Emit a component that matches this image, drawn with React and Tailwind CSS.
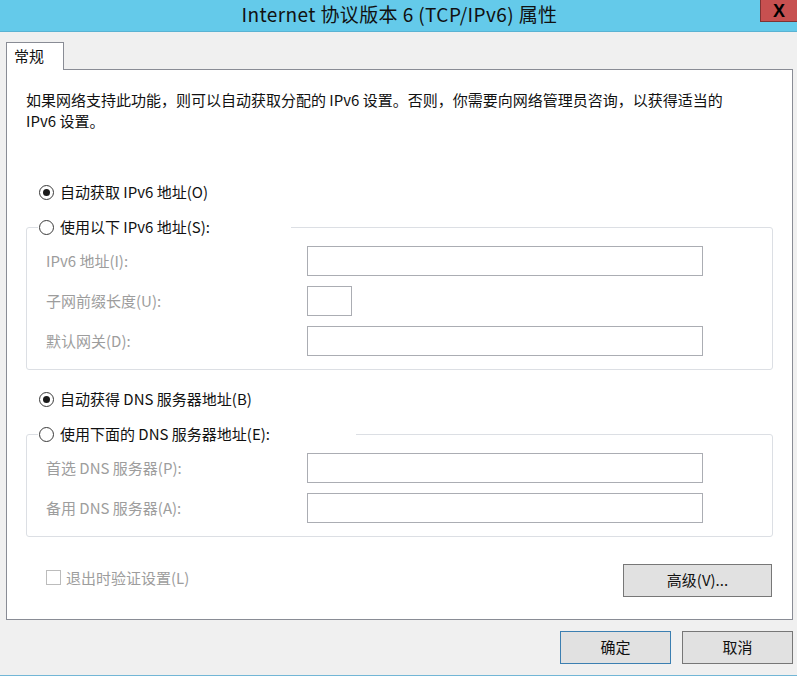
import React from "react";

const FONT = { fontFamily: '"Noto Sans CJK SC", "Noto Sans", sans-serif' };

function Radio({ checked, label }) {
  return (
    <div className="flex items-center h-[20px] leading-[20px] whitespace-nowrap">
      <span className="ml-px w-[15px] h-[15px] rounded-full border border-[#3a3a3a] bg-white flex items-center justify-center shrink-0">
        {checked && <span className="w-[7px] h-[7px] rounded-full bg-[#1a1a1a]" />}
      </span>
      <span className="ml-[6px] text-[15px] text-[#111]">{label}</span>
    </div>
  );
}

function Row({ label, small }) {
  return (
    <div className="flex items-center h-[30px] pl-2">
      <div className="w-[261px] text-[15px] text-[#9d9d9d] whitespace-nowrap leading-[20px]">{label}</div>
      <div className={`${small ? "w-[45px]" : "w-[396px]"} h-[30px] border border-[#abadb3] bg-white`} />
    </div>
  );
}

function Group({ legendWidth, radioLabel, children }) {
  return (
    <fieldset className="border border-[#dcdfe4] rounded-[3px] pl-[11px] pr-[11px] pt-[9px] pb-[13px]">
      <legend className="p-0" style={{ width: legendWidth }}>
        <Radio checked={false} label={radioLabel} />
      </legend>
      <div className="flex flex-col gap-[10px]">{children}</div>
    </fieldset>
  );
}

export default function App() {
  return (
    <div className="w-[797px] h-[676px] bg-[#f0f0f0] flex flex-col border-b border-[#72b6d6] overflow-hidden" style={FONT}>
      {/* Title bar */}
      <div className="relative h-[32px] shrink-0 bg-[#64caea] border-b border-[#5ab3d3] flex items-start justify-center">
        <div className="text-[19px] tracking-[0.4px] leading-[27px] text-[#111] whitespace-nowrap pl-[2px]">Internet 协议版本 6 (TCP/IPv6) 属性</div>
        <div className="absolute right-0 top-0 w-[37px] h-[22px] bg-[#c75050] border-l border-b border-[#7e3434] flex items-center justify-center">
          <span className="text-[18px] font-bold leading-none text-black" style={{ fontFamily: '"Liberation Sans", sans-serif' }}>X</span>
        </div>
      </div>

      {/* Tab */}
      <div className="mt-[10px] ml-[6px] flex">
        <div className="relative z-10 w-[58px] h-[28px] -mb-px bg-white border-t border-l border-r border-[#898c95] pl-[7px] text-[15px] leading-[26px] text-[#111]">
          常规
        </div>
      </div>

      {/* Panel */}
      <div className="ml-[6px] w-[787px] h-[551px] bg-white border border-[#898c95] px-[19px] flex flex-col shrink-0">
        <p className="mt-[19px] text-[15px] leading-[21px] text-[#111] whitespace-nowrap">
          如果网络支持此功能，则可以自动获取分配的 IPv6 设置。否则，你需要向网络管理员咨询，以获得适当的
          <br />
          IPv6 设置。
        </p>

        <div className="mt-[51px] pl-[12px]">
          <Radio checked label="自动获取 IPv6 地址(O)" />
        </div>

        <div className="mt-[15px]">
          <Group legendWidth="253px" radioLabel="使用以下 IPv6 地址(S):">
            <Row label="IPv6 地址(I):" />
            <Row label="子网前缀长度(U):" small />
            <Row label="默认网关(D):" />
          </Group>
        </div>

        <div className="mt-[19px] pl-[12px]">
          <Radio checked label="自动获得 DNS 服务器地址(B)" />
        </div>

        <div className="mt-[15px]">
          <Group legendWidth="318px" radioLabel="使用下面的 DNS 服务器地址(E):">
            <Row label="首选 DNS 服务器(P):" />
            <Row label="备用 DNS 服务器(A):" />
          </Group>
        </div>

        <div className="mt-[27px] flex justify-between items-start">
          <div className="mt-[3px] ml-[20px] flex items-center h-[21px]">
            <span className="w-[15px] h-[15px] border border-[#bcbcbc] bg-white" />
            <span className="ml-[5px] text-[15px] leading-[21px] text-[#9d9d9d]">退出时验证设置(L)</span>
          </div>
          <div className="mr-px w-[149px] h-[33px] bg-[#e1e1e1] border border-[#777] flex items-center justify-center text-[15px] text-[#111]">
            高级(V)...
          </div>
        </div>
      </div>

      {/* Bottom buttons */}
      <div className="mt-[11px] flex justify-end gap-[11px] pr-[4px]">
        <div className="w-[111px] h-[33px] bg-[#e1e1e1] border border-[#3c7fb1] flex items-center justify-center text-[15px] text-[#111]">确定</div>
        <div className="w-[111px] h-[33px] bg-[#e1e1e1] border border-[#777] flex items-center justify-center text-[15px] text-[#111]">取消</div>
      </div>
    </div>
  );
}
